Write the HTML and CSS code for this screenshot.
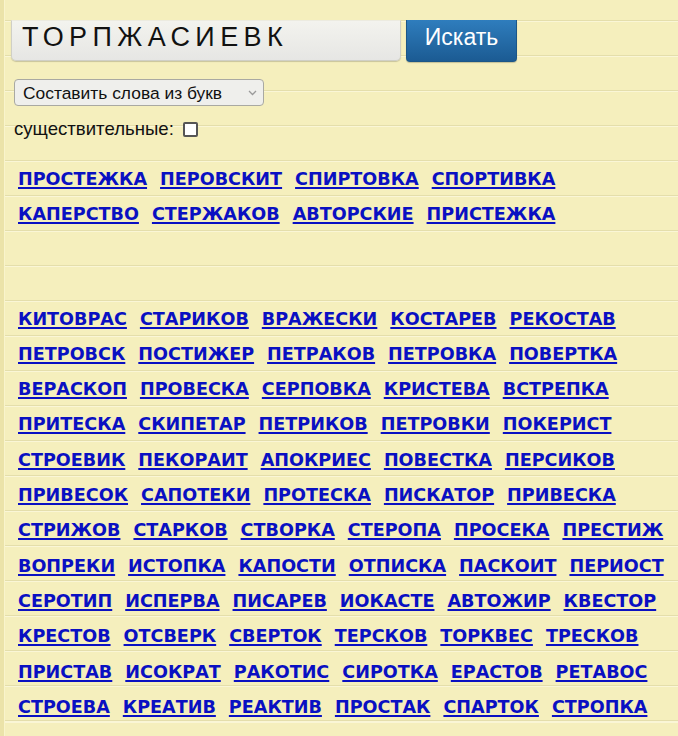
FILE: index.html
```html
<!DOCTYPE html>
<html lang="ru">
<head>
<meta charset="utf-8">
<title>Составить слова из букв</title>
<link rel="stylesheet" href="styles.css">
</head>
<body>
<div class="page">
  <form class="search">
    <input class="letters" type="text" value="ТОРПЖАСИЕВК">
    <button class="go" type="button">Искать</button>
  </form>
  <div class="select-wrap">
    <select class="mode">
      <option>Составить слова из букв</option>
    </select>
    <svg class="chev" width="9" height="6" viewBox="0 0 9 6"><path d="M1 1l3.5 3.5L8 1" fill="none" stroke="#9a9a9a" stroke-width="1.3"/></svg>
  </div>
  <label class="nouns">существительные: <input type="checkbox" class="cb"></label>

  <div class="words">
    <div class="group">
      <div class="row"><a href="#">ПРОСТЕЖКА</a><a href="#">ПЕРОВСКИТ</a><a href="#">СПИРТОВКА</a><a href="#">СПОРТИВКА</a></div>
      <div class="row"><a href="#">КАПЕРСТВО</a><a href="#">СТЕРЖАКОВ</a><a href="#">АВТОРСКИЕ</a><a href="#">ПРИСТЕЖКА</a></div>
    </div>
    <div class="group">
      <div class="row"><a href="#">КИТОВРАС</a><a href="#">СТАРИКОВ</a><a href="#">ВРАЖЕСКИ</a><a href="#">КОСТАРЕВ</a><a href="#">РЕКОСТАВ</a></div>
      <div class="row"><a href="#">ПЕТРОВСК</a><a href="#">ПОСТИЖЕР</a><a href="#">ПЕТРАКОВ</a><a href="#">ПЕТРОВКА</a><a href="#">ПОВЕРТКА</a></div>
      <div class="row"><a href="#">ВЕРАСКОП</a><a href="#">ПРОВЕСКА</a><a href="#">СЕРПОВКА</a><a href="#">КРИСТЕВА</a><a href="#">ВСТРЕПКА</a></div>
      <div class="row"><a href="#">ПРИТЕСКА</a><a href="#">СКИПЕТАР</a><a href="#">ПЕТРИКОВ</a><a href="#">ПЕТРОВКИ</a><a href="#">ПОКЕРИСТ</a></div>
      <div class="row"><a href="#">СТРОЕВИК</a><a href="#">ПЕКОРАИТ</a><a href="#">АПОКРИЕС</a><a href="#">ПОВЕСТКА</a><a href="#">ПЕРСИКОВ</a></div>
      <div class="row"><a href="#">ПРИВЕСОК</a><a href="#">САПОТЕКИ</a><a href="#">ПРОТЕСКА</a><a href="#">ПИСКАТОР</a><a href="#">ПРИВЕСКА</a></div>
      <div class="row"><a href="#">СТРИЖОВ</a><a href="#">СТАРКОВ</a><a href="#">СТВОРКА</a><a href="#">СТЕРОПА</a><a href="#">ПРОСЕКА</a><a href="#">ПРЕСТИЖ</a></div>
      <div class="row"><a href="#">ВОПРЕКИ</a><a href="#">ИСТОПКА</a><a href="#">КАПОСТИ</a><a href="#">ОТПИСКА</a><a href="#">ПАСКОИТ</a><a href="#">ПЕРИОСТ</a></div>
      <div class="row"><a href="#">СЕРОТИП</a><a href="#">ИСПЕРВА</a><a href="#">ПИСАРЕВ</a><a href="#">ИОКАСТЕ</a><a href="#">АВТОЖИР</a><a href="#">КВЕСТОР</a></div>
      <div class="row"><a href="#">КРЕСТОВ</a><a href="#">ОТСВЕРК</a><a href="#">СВЕРТОК</a><a href="#">ТЕРСКОВ</a><a href="#">ТОРКВЕС</a><a href="#">ТРЕСКОВ</a></div>
      <div class="row"><a href="#">ПРИСТАВ</a><a href="#">ИСОКРАТ</a><a href="#">РАКОТИС</a><a href="#">СИРОТКА</a><a href="#">ЕРАСТОВ</a><a href="#">РЕТАВОС</a></div>
      <div class="row"><a href="#">СТРОЕВА</a><a href="#">КРЕАТИВ</a><a href="#">РЕАКТИВ</a><a href="#">ПРОСТАК</a><a href="#">СПАРТОК</a><a href="#">СТРОПКА</a></div>
    </div>
  </div>
</div>
</body>
</html>
```

FILE: styles.css
```css
html {
  min-height: 100%;
  background-color: #f5efbd;
  background-image:
    linear-gradient(to right, #ebe3a9 0 4px, #f9f4cc 4px 5px, transparent 5px),
    repeating-linear-gradient(to bottom, #faf6d6 0 1px, transparent 1px 34px, #e4deab 34px 35px);
  background-position: 0 0, 0 -14px;
  background-repeat: repeat-y, repeat;
}

body {
  margin: 0;
  font-family: "Liberation Sans", Arial, sans-serif;
  color: #111;
}

.page {
  padding-top: 20px;
  width: 678px;
  overflow: hidden;
}

.search {
  display: flex;
  gap: 5px;
  margin: 0 0 0 11px;
  height: 42px;
}

.letters {
  box-sizing: border-box;
  width: 390px;
  height: 41px;
  margin: 0;
  padding: 0 0 6px 10px;
  border: 1px solid #cfcfc6;
  border-top-color: #ecebe0;
  border-radius: 0 0 5px 5px;
  background: linear-gradient(to bottom, #f3f3ee, #e6e6e4);
  box-shadow: 0 1px 1px rgba(0, 0, 0, 0.18);
  font-family: "Liberation Sans", Arial, sans-serif;
  font-size: 27px;
  letter-spacing: 5.4px;
  color: #111;
  outline: none;
}

.go {
  box-sizing: border-box;
  width: 111px;
  height: 42px;
  margin: 0;
  padding: 0 0 7px;
  border: 1px solid #1b5687;
  border-top: none;
  border-radius: 0 0 4px 4px;
  background: linear-gradient(to bottom, #2f7dbd, #1b5b93);
  color: #fff;
  font-family: "Liberation Sans", Arial, sans-serif;
  font-size: 23px;
  box-shadow: 0 1px 1px rgba(0, 0, 0, 0.2);
}

.select-wrap {
  position: relative;
  width: 250px;
  height: 27px;
  margin: 17px 0 0 14px;
}

.mode {
  appearance: none;
  -webkit-appearance: none;
  box-sizing: border-box;
  width: 250px;
  height: 27px;
  margin: 0;
  padding: 0 0 0 8px;
  border: 1px solid #a9a9a2;
  border-radius: 4px;
  background: #efefec;
  font-family: "Liberation Sans", Arial, sans-serif;
  font-size: 17.4px;
  color: #111;
}

.chev {
  position: absolute;
  right: 7px;
  top: 11px;
  pointer-events: none;
}

.nouns {
  display: flex;
  align-items: center;
  height: 22px;
  margin: 12px 0 0 14px;
  font-size: 18.6px;
  color: #111;
}

.cb {
  width: 15px;
  height: 15px;
  margin: 0 0 0 9px;
  appearance: none;
  -webkit-appearance: none;
  box-sizing: border-box;
  border: 2px solid #555;
  border-radius: 2px;
  background: #fff;
}

.words {
  margin-top: 22px;
  padding-left: 18px;
}

.group + .group {
  margin-top: 69px;
}

.row {
  display: flex;
  gap: 13px;
  height: 35.3px;
  line-height: 35.3px;
  white-space: nowrap;
}

.row a {
  font-family: "DejaVu Sans", Verdana, sans-serif;
  font-weight: bold;
  font-size: 17.6px;
  color: #0a10c2;
  text-decoration: underline;
  text-decoration-thickness: 2px;
  text-underline-offset: 2px;
}
```
